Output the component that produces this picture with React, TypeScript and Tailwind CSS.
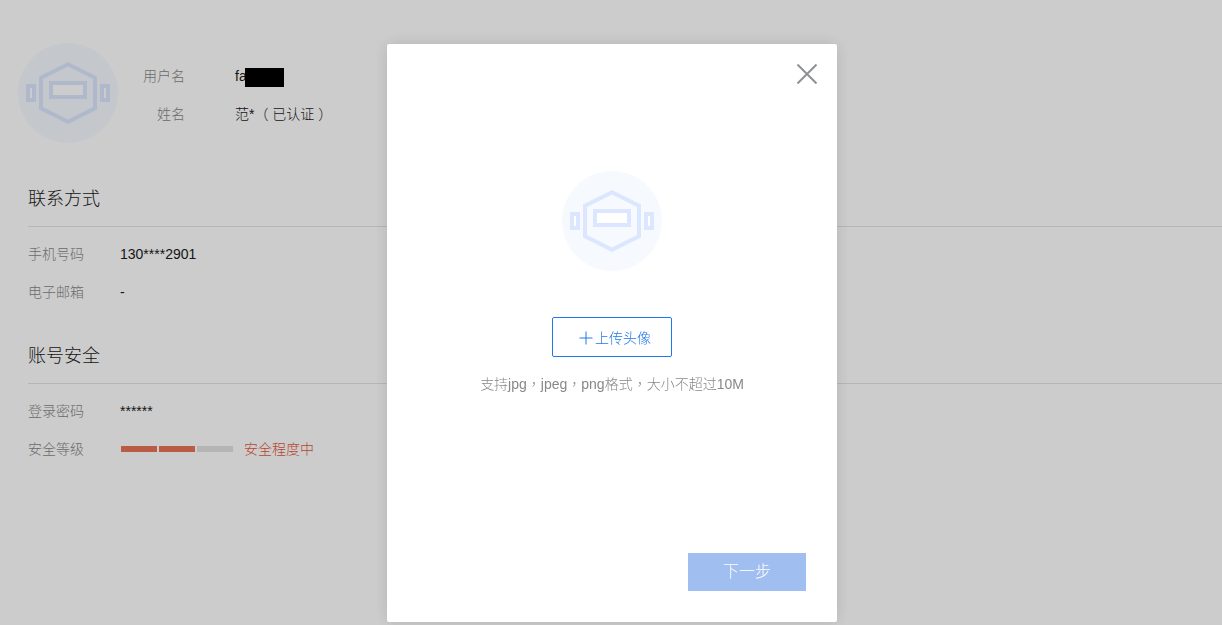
import type { ReactNode } from "react";

function Avatar() {
  return (
    <svg className="size-[100px] shrink-0" viewBox="0 0 100 100" role="img" aria-label="头像">
      <circle cx="50" cy="50" r="50" fill="#f6faff" />
      <g stroke="#dce6ff" strokeWidth="4">
        <path d="M50 21.2 77 34.8V65.2L50 78.8 23 65.2V34.8Z" fill="none" />
        <rect x="33" y="40" width="34" height="14" fill="#fff" />
        <rect x="10" y="43" width="6" height="14" fill="#fff" />
        <rect x="84" y="43" width="6" height="14" fill="#fff" />
      </g>
    </svg>
  );
}

function Row({ label, children }: { label: string; children: ReactNode }) {
  return (
    <div className="flex h-[38px] items-center">
      <dt className="w-[92px] text-[#888]">{label}</dt>
      <dd className="flex items-center">{children}</dd>
    </div>
  );
}

function Section({ title, children }: { title: string; children: ReactNode }) {
  return (
    <section className="mb-[26px] ml-7">
      <h2 className="border-b border-[#e4e4e4] pb-2 text-lg leading-[38px]">{title}</h2>
      <dl className="pt-2">{children}</dl>
    </section>
  );
}

export default function App() {
  return (
    <div className="relative min-h-screen bg-white font-['Liberation_Sans','Noto_Sans_CJK_SC',sans-serif] text-sm font-light text-[#1a1a1a]">
      <main className="pt-[43px]">
        <header className="mb-[37px] ml-[18px] flex h-[100px]">
          <Avatar />
          <dl className="pt-3.5">
            <div className="flex h-[38px] items-center">
              <dt className="w-[67px] text-right text-[#888]">用户名</dt>
              <dd className="ml-[50px] flex items-center">
                fa<span className="mt-0.5 -ml-0.5 h-[19px] w-[39px] bg-black" />
              </dd>
            </div>
            <div className="flex h-[38px] items-center">
              <dt className="w-[67px] text-right text-[#888]">姓名</dt>
              <dd className="ml-[50px]">范*（ 已认证 ）</dd>
            </div>
          </dl>
        </header>
        <Section title="联系方式">
          <Row label="手机号码">130****2901</Row>
          <Row label="电子邮箱">-</Row>
        </Section>
        <Section title="账号安全">
          <Row label="登录密码">******</Row>
          <Row label="安全等级">
            <span className="ml-px flex gap-0.5">
              <span className="h-1.5 w-9 bg-[#e87458]" />
              <span className="h-1.5 w-9 bg-[#e87458]" />
              <span className="h-1.5 w-9 bg-[#e3e3e3]" />
            </span>
            <span className="ml-[11px] text-[#e4593c]">安全程度中</span>
          </Row>
        </Section>
      </main>

      <div className="fixed inset-0 flex items-start justify-center bg-black/20 pt-11 pl-0.5">
        <div
          role="dialog"
          aria-modal="true"
          aria-label="上传头像"
          className="flex w-[450px] flex-col items-center rounded-xs bg-white pb-[31px] shadow-[0_0_16px_rgba(0,0,0,0.12)]"
        >
          <button type="button" aria-label="关闭" className="mt-5 mr-5 self-end">
            <svg className="size-5" viewBox="0 0 20 20" fill="none" stroke="#8f9197" strokeWidth="2">
              <path d="M0.5 0.5 19.5 19.5M19.5 0.5 0.5 19.5" />
            </svg>
          </button>
          <div className="mt-[87px] flex">
            <Avatar />
          </div>
          <button
            type="button"
            className="mt-[46px] flex h-10 w-[120px] items-center justify-center gap-0.5 rounded-xs border border-[#1f77ec] pt-0.5 pl-1.5 text-[#1f77ec]"
          >
            <svg className="size-3.5" viewBox="0 0 14 14" fill="none" stroke="currentColor">
              <path d="M0.5 7H13.5M7 0.5V13.5" />
            </svg>
            上传头像
          </button>
          <p className="mt-[17px] font-['Liberation_Sans','Noto_Sans_CJK_TC',sans-serif] text-[#888]">
            支持jpg，jpeg，png格式，大小不超过10M
          </p>
          <button
            type="button"
            className="mt-[159px] mr-[31px] h-[38px] w-[118px] self-end bg-[#a0bff0] text-base text-white"
          >
            下一步
          </button>
        </div>
      </div>
    </div>
  );
}
